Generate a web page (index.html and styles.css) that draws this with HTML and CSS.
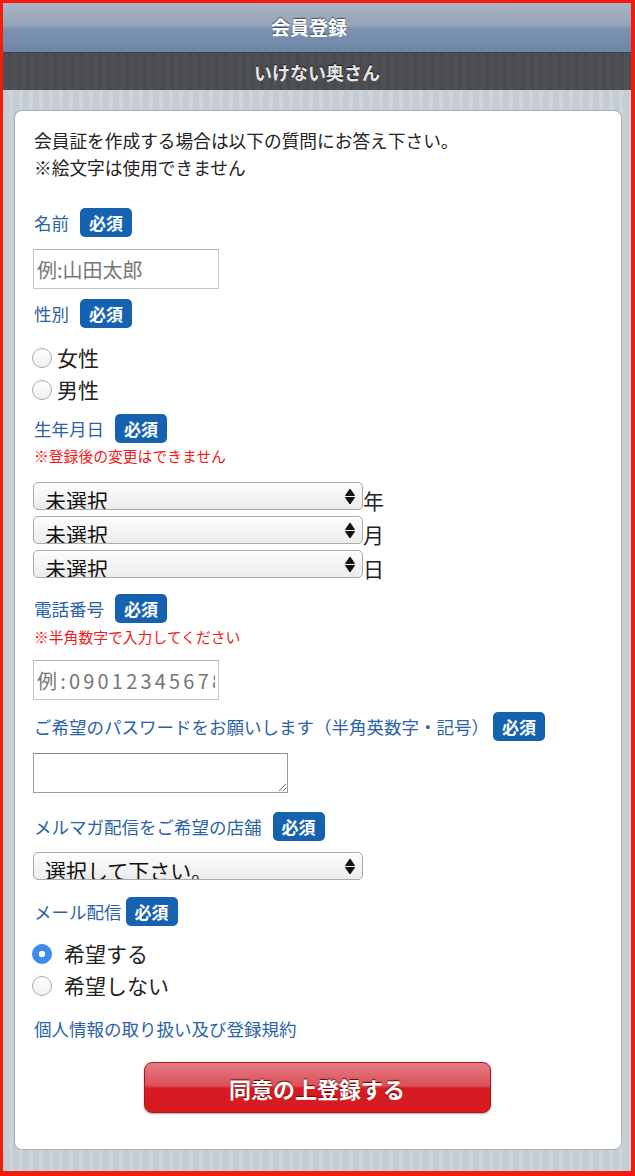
FILE: index.html
```html
<!DOCTYPE html>
<html lang="ja">
<head>
<meta charset="utf-8">
<title>会員登録</title>
<link rel="stylesheet" href="styles.css">
</head>
<body>
<div class="frame">
  <header class="topbar"><h1>会員登録</h1></header>
  <div class="subbar">いけない奥さん</div>
  <main class="bg">
    <form class="card">
      <p class="intro">会員証を作成する場合は以下の質問にお答え下さい。<br>※絵文字は使用できません</p>

      <div class="label m-27"><span>名前</span><span class="req">必須</span></div>
      <input class="text m-12" type="text" placeholder="例:山田太郎">

      <div class="label m-10"><span>性別</span><span class="req">必須</span></div>
      <div class="radios m-13">
        <label class="radio"><input type="radio" name="sex"><span>女性</span></label>
        <label class="radio"><input type="radio" name="sex"><span>男性</span></label>
      </div>

      <div class="label m-9"><span>生年月日</span><span class="req">必須</span></div>
      <p class="note m-3">※登録後の変更はできません</p>
      <div class="dates m-16">
        <div class="date-row"><select class="select"><option>未選択</option></select><span>年</span></div>
        <div class="date-row"><select class="select"><option>未選択</option></select><span>月</span></div>
        <div class="date-row"><select class="select"><option>未選択</option></select><span>日</span></div>
      </div>

      <div class="label m-16"><span>電話番号</span><span class="req">必須</span></div>
      <p class="note m-4">※半角数字で入力してください</p>
      <input class="text tel m-13" type="tel" placeholder="例:09012345678">

      <div class="label tight m-12"><span>ご希望のパスワードをお願いします（半角英数字・記号）</span><span class="req">必須</span></div>
      <textarea class="pass m-12"></textarea>

      <div class="label m-19"><span>メルマガ配信をご希望の店舗</span><span class="req">必須</span></div>
      <select class="select m-11"><option>選択して下さい。</option></select>

      <div class="label tight m-17"><span>メール配信</span><span class="req">必須</span></div>
      <div class="radios m-11">
        <label class="radio wide"><input type="radio" name="mail" checked><span>希望する</span></label>
        <label class="radio wide"><input type="radio" name="mail"><span>希望しない</span></label>
      </div>

      <a class="terms m-16" href="#">個人情報の取り扱い及び登録規約</a>

      <button class="submit m-21" type="button">同意の上登録する</button>
    </form>
  </main>
</div>
</body>
</html>
```
FILE: styles.css
```css
* { box-sizing: border-box; }
html, body { margin: 0; padding: 0; }
body {
  font-family: "Noto Sans CJK JP", "Noto Sans", sans-serif;
  color: #222;
  background: #fff;
}
.frame {
  width: 635px;
  height: 1176px;
  border: solid #f31d0b;
  border-width: 3px 4px 5px 3px;
  display: flex;
  flex-direction: column;
  overflow: hidden;
}
.topbar {
  flex: none;
  height: 50px;
  padding-right: 16px;
  background: linear-gradient(#a9b5c5 0%, #94a3b8 46%, #7e93af 52%, #6c85a6 100%);
  border-bottom: 1px solid #3a4456;
  display: flex;
  align-items: center;
  justify-content: center;
}
.topbar h1 {
  margin: 0 0 2px;
  font-size: 19px;
  font-weight: 700;
  color: #fff;
  text-shadow: 0 -1px 1px #3d4a5e;
}
.subbar {
  flex: none;
  height: 37px;
  background: repeating-linear-gradient(90deg, #4f5054 0 5px, #4a4b4f 5px 9px);
  color: #e6e6e6;
  font-weight: 700;
  font-size: 18px;
  display: flex;
  align-items: center;
  justify-content: center;
  text-shadow: 0 -1px 1px #111;
}
.bg {
  flex: 1;
  background: repeating-linear-gradient(90deg, #c6ccd4 0 6px, #ced4db 6px 10px);
  padding: 20px 9px 0 11px;
}
.card {
  background: #fff;
  border: 1px solid #a8adb3;
  border-radius: 8px;
  padding: 16px 20px 36px 18px;
  display: flex;
  flex-direction: column;
  align-items: flex-start;
}
.intro {
  margin: 0;
  padding-left: 1px;
  font-size: 17.7px;
  line-height: 27px;
  color: #222;
}
.label {
  display: flex;
  align-items: center;
  gap: 11px;
  height: 29px;
  padding-left: 1px;
  color: #2b62a6;
  font-size: 17.5px;
}
.label.tight { gap: 4px; }
.req {
  display: flex;
  align-items: center;
  height: 29px;
  padding: 0 9px;
  border-radius: 5px;
  background: #1562b0;
  color: #fff;
  font-weight: 700;
  font-size: 17px;
}
.text {
  width: 186px;
  height: 40px;
  border: 1px solid #c6c6c6;
  border-top-color: #b4b4b4;
  padding: 0 3px;
  font-family: inherit;
  font-size: 20px;
  color: #222;
  outline: none;
}
.text::placeholder { color: #767676; }
.tel { letter-spacing: 3.2px; }
.radios { display: flex; flex-direction: column; }
.radio {
  display: flex;
  align-items: center;
  height: 32px;
  font-size: 21px;
  color: #222;
}
.radio input {
  appearance: none;
  width: 20px;
  height: 20px;
  margin: 2px 5px 0 -1px;
  border: 1px solid #ababab;
  border-radius: 50%;
  background: linear-gradient(#fff, #f1f1f1);
}
.radio.wide input { margin-right: 12px; }
.radio input:checked {
  border-color: #3a86e6;
  background: radial-gradient(circle, #fff 0 3px, #3b8cf0 3.6px);
}
.note {
  margin-bottom: 0;
  margin-right: 0;
  margin-left: 0;
  padding-left: 1px;
  font-size: 14.8px;
  line-height: 20px;
  color: #f41818;
}
.dates { display: flex; flex-direction: column; gap: 6px; }
.date-row {
  display: flex;
  align-items: baseline;
  height: 28px;
  font-size: 21px;
  line-height: 22px;
  color: #222;
}
.select {
  appearance: none;
  width: 330px;
  height: 28px;
  border: 1px solid #a9a9a9;
  border-radius: 5px;
  padding: 6px 20px 0 11px;
  background:
    url("data:image/svg+xml,%3Csvg xmlns='http://www.w3.org/2000/svg' width='12' height='17'%3E%3Cpath d='M6 1L10.5 7.5H1.5Z M6 16L10.5 9.5H1.5Z' fill='%23111' stroke='%23111' stroke-linejoin='round'/%3E%3C/svg%3E") no-repeat right 6px center / 12px 17px,
    linear-gradient(#fdfdfd, #ececec);
  font-family: inherit;
  font-size: 21px;
  color: #111;
  line-height: 22px;
  overflow: hidden;
}
.pass {
  width: 255px;
  height: 40px;
  border: 1px solid #9c9c9c;
  border-top-color: #8a8a8a;
  font-family: inherit;
  font-size: 16px;
  resize: both;
}
.terms {
  display: block;
  padding-left: 1px;
  font-size: 17.5px;
  line-height: 24px;
  color: #2b62a6;
  text-decoration: none;
}
.submit {
  align-self: center;
  width: 347px;
  height: 51px;
  border: 1px solid #a9171c;
  border-radius: 8px;
  background: linear-gradient(#e47d84 0%, #dc5159 46%, #d61b22 52%, #d91a20 100%);
  box-shadow: 0 1px 2px rgba(0, 0, 0, 0.35);
  color: #fff;
  font-family: inherit;
  font-weight: 700;
  font-size: 22px;
  text-shadow: 0 -1px 1px #6b0000;
  cursor: pointer;
}
.m-3 { margin-top: 3px; }
.m-4 { margin-top: 4px; }
.m-9 { margin-top: 9px; }
.m-10 { margin-top: 10px; }
.m-11 { margin-top: 11px; }
.m-12 { margin-top: 12px; }
.m-13 { margin-top: 13px; }
.m-16 { margin-top: 16px; }
.m-17 { margin-top: 17px; }
.m-19 { margin-top: 19px; }
.m-21 { margin-top: 21px; }
.m-27 { margin-top: 27px; }
```
